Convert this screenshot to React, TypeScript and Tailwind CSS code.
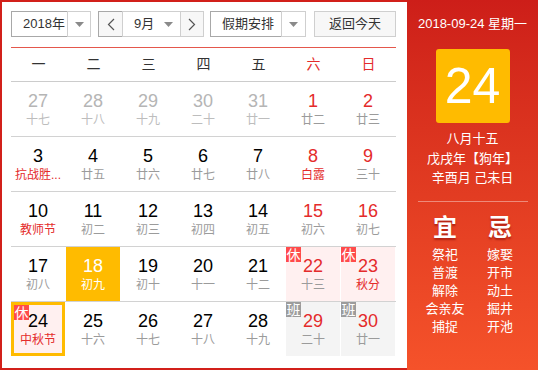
import React from "react";

type Day = {
  d: number;
  l: string;
  muted?: boolean;
  red?: boolean;
  fest?: boolean;
  tag?: "休" | "班";
  selected?: boolean;
  today?: boolean;
};

const rows: Day[][] = [
  [
    { d: 27, l: "十七", muted: true },
    { d: 28, l: "十八", muted: true },
    { d: 29, l: "十九", muted: true },
    { d: 30, l: "二十", muted: true },
    { d: 31, l: "廿一", muted: true },
    { d: 1, l: "廿二", red: true },
    { d: 2, l: "廿三", red: true },
  ],
  [
    { d: 3, l: "抗战胜...", fest: true },
    { d: 4, l: "廿五" },
    { d: 5, l: "廿六" },
    { d: 6, l: "廿七" },
    { d: 7, l: "廿八" },
    { d: 8, l: "白露", red: true, fest: true },
    { d: 9, l: "三十", red: true },
  ],
  [
    { d: 10, l: "教师节", fest: true },
    { d: 11, l: "初二" },
    { d: 12, l: "初三" },
    { d: 13, l: "初四" },
    { d: 14, l: "初五" },
    { d: 15, l: "初六", red: true },
    { d: 16, l: "初七", red: true },
  ],
  [
    { d: 17, l: "初八" },
    { d: 18, l: "初九", selected: true },
    { d: 19, l: "初十" },
    { d: 20, l: "十一" },
    { d: 21, l: "十二" },
    { d: 22, l: "十三", red: true, tag: "休" },
    { d: 23, l: "秋分", red: true, fest: true, tag: "休" },
  ],
  [
    { d: 24, l: "中秋节", fest: true, tag: "休", today: true },
    { d: 25, l: "十六" },
    { d: 26, l: "十七" },
    { d: 27, l: "十八" },
    { d: 28, l: "十九" },
    { d: 29, l: "二十", red: true, tag: "班" },
    { d: 30, l: "廿一", red: true, tag: "班" },
  ],
];

const weekdays = ["一", "二", "三", "四", "五", "六", "日"];
const good = ["祭祀", "普渡", "解除", "会亲友", "捕捉"];
const bad = ["嫁娶", "开市", "动土", "掘井", "开池"];

function Caret() {
  return (
    <svg width="9" height="5" viewBox="0 0 9 5">
      <path d="M0 0h9L4.5 5z" fill="#8a8a8a" />
    </svg>
  );
}

function Chevron({ dir }: { dir: "left" | "right" }) {
  return (
    <svg width="8" height="13" viewBox="0 0 8 13">
      <path
        d={dir === "left" ? "M7 1L1.5 6.5 7 12" : "M1 1l5.5 5.5L1 12"}
        fill="none"
        stroke="#555"
        strokeWidth="1.2"
      />
    </svg>
  );
}

function DayCell({ day }: { day: Day }) {
  let bg = "";
  if (day.selected) bg = "bg-[#ffbb00]";
  else if (day.tag === "休") bg = "bg-[#fff0f0]";
  else if (day.tag === "班") bg = "bg-[#f4f4f4]";

  let num = "text-black";
  if (day.muted) num = "text-[#b5b5b5]";
  else if (day.red) num = "text-[#e42b2b]";
  if (day.selected) num = "text-white";

  let lunar = "text-[#9b9b9b]";
  if (day.muted) lunar = "text-[#bdbdbd]";
  if (day.fest) lunar = "text-[#e42b2b]";
  if (day.selected) lunar = "text-white";

  return (
    <div
      className={`relative mr-px flex h-[54px] flex-col items-center ${bg} ${
        day.today ? "border-[3px] border-[#ffbb00] bg-[#fff0f0] pt-[5px]" : "pt-[8px]"
      }`}
    >
      {day.tag && (
        <span
          className={`absolute top-0 left-0 flex h-[15px] w-[15px] items-center justify-center text-[14px] leading-none text-white ${
            day.today ? "-top-[3px] -left-[3px]" : ""
          } ${day.tag === "休" ? "bg-[#ff4b4b]" : "bg-[#9c9c9c]"}`}
        >
          {day.tag}
        </span>
      )}
      <span className={`text-[18px] leading-[22px] ${num}`}>{day.d}</span>
      <span className={`text-[12px] leading-[16px] ${lunar}`}>{day.l}</span>
    </div>
  );
}

export default function App() {
  return (
    <div className="flex h-[370px] w-[538px] font-['Liberation_Sans','Noto_Sans_CJK_SC',sans-serif]">
      <div className="w-[407px] shrink-0 border-y-2 border-l-2 border-[#d2201a] bg-white pt-[9px] pr-[10px] pl-[9px]">
        <div className="mb-[10px] flex h-[26px] text-[13px] whitespace-nowrap text-[#333]">
          <div className="flex w-[80px]">
            <div className="flex flex-1 items-center border border-r-0 border-[#a8a8a8] pl-[11px]">
              2018年
            </div>
            <div className="flex w-[24px] items-center justify-center border border-[#cfcfcf]">
              <Caret />
            </div>
          </div>
          <div className="ml-[7px] flex w-[106px]">
            <div className="flex w-[24px] items-center justify-center border border-r-0 border-[#a8a8a8] bg-[#f7f7f7]">
              <Chevron dir="left" />
            </div>
            <div className="flex flex-1 items-center justify-between border border-[#cfcfcf] pr-[7px] pl-[11px]">
              <span>9月</span>
              <Caret />
            </div>
            <div className="flex w-[23px] items-center justify-center border border-l-0 border-[#cfcfcf] bg-[#f7f7f7]">
              <Chevron dir="right" />
            </div>
          </div>
          <div className="ml-[6px] flex w-[96px]">
            <div className="flex flex-1 items-center border border-r-0 border-[#a8a8a8] pl-[11px]">
              假期安排
            </div>
            <div className="flex w-[25px] items-center justify-center border border-[#cfcfcf]">
              <Caret />
            </div>
          </div>
          <button
            className="ml-[8px] flex w-[82px] items-center justify-center border border-[#cfcfcf] bg-[#f7f7f7] text-[13px] text-[#333]"
            type="button"
          >
            返回今天
          </button>
        </div>

        <div className="w-[385px]">
          <div className="grid h-[35px] grid-cols-7 items-center border-y border-t-[#e4574c] border-b-[#cccccc] text-center text-[14px]">
            {weekdays.map((w, i) => (
              <span key={w} className={i > 4 ? "text-[#e42b2b]" : "text-[#333]"}>
                {w}
              </span>
            ))}
          </div>
          {rows.map((row, r) => (
            <div
              key={r}
              className={`grid grid-cols-7 ${r < rows.length - 1 ? "border-b border-[#d2d2d2]" : ""}`}
            >
              {row.map((day) => (
                <DayCell key={`${r}-${day.d}`} day={day} />
              ))}
            </div>
          ))}
        </div>
      </div>

      <div className="flex w-[131px] flex-col items-center bg-gradient-to-b from-[#cd1e19] to-[#f5522a] text-white">
        <p className="mt-[15px] text-[13px] leading-[18px]">2018-09-24 星期一</p>
        <div className="mt-[16px] flex h-[74px] w-[74px] items-center justify-center rounded-[3px] bg-[#ffbb00] text-[50px] leading-none">
          24
        </div>
        <div className="mt-[6px] flex flex-col items-center text-[13px] leading-[19.5px]">
          <p>八月十五</p>
          <p>戊戌年【狗年】</p>
          <p>辛酉月 己未日</p>
        </div>
        <div className="mt-[13px] h-px w-[110px] bg-white/40" />
        <div className="mt-[14px] grid w-[110px] grid-cols-2 text-center">
          <p className="text-[24px] leading-[24px] font-bold [text-shadow:0_2px_2px_rgba(120,0,0,0.5)]">宜</p>
          <p className="text-[24px] leading-[24px] font-bold [text-shadow:0_2px_2px_rgba(120,0,0,0.5)]">忌</p>
          <div className="mt-[6px] flex flex-col text-[13px] leading-[18px]">
            {good.map((g) => (
              <span key={g}>{g}</span>
            ))}
          </div>
          <div className="mt-[6px] flex flex-col text-[13px] leading-[18px]">
            {bad.map((b) => (
              <span key={b}>{b}</span>
            ))}
          </div>
        </div>
      </div>
    </div>
  );
}
